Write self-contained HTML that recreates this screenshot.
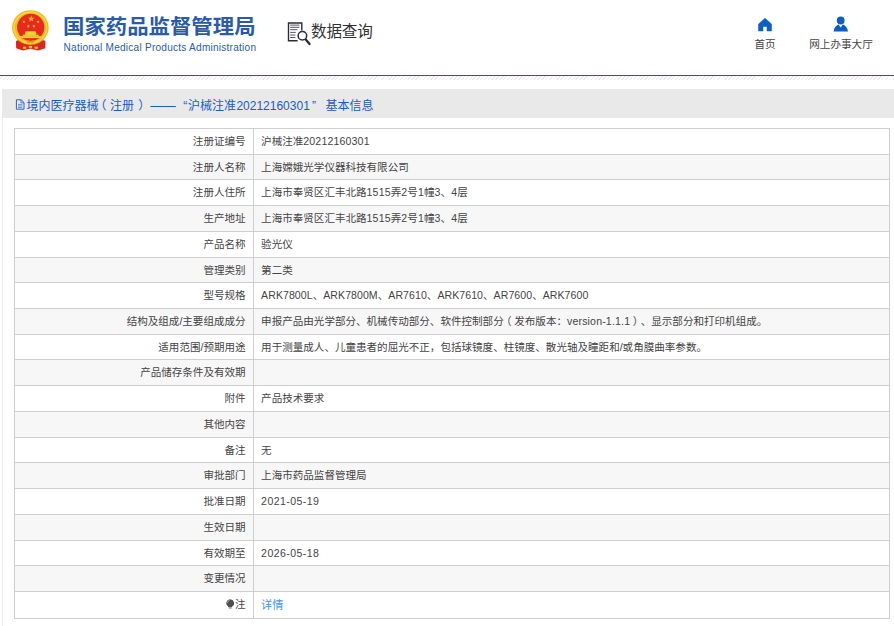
<!DOCTYPE html>
<html lang="zh-CN">
<head>
<meta charset="utf-8">
<title>国家药品监督管理局 数据查询</title>
<style>
*{box-sizing:border-box;}
html,body{margin:0;padding:0;background:#fff;}
body{text-spacing-trim:space-all;width:894px;height:626px;overflow:hidden;position:relative;font-family:"Liberation Sans","Noto Sans CJK SC",sans-serif;color:#333;}
.abs{position:absolute;}
#emblem{left:10px;top:8px;width:42px;height:46px;}
#t1{left:63px;top:12.3px;font-size:21.4px;line-height:30px;font-weight:bold;color:#2a5bab;white-space:nowrap;transform:scaleY(0.94);transform-origin:0 100%;}
#t2{left:63.6px;top:40.7px;font-size:10.1px;line-height:13px;color:#2a5cad;white-space:nowrap;letter-spacing:0.23px;}
#qicon{left:286px;top:21px;width:26px;height:26px;}
#qtext{left:311px;top:19px;font-size:15.6px;line-height:26px;color:#333;white-space:nowrap;letter-spacing:-0.2px;}
.nav{font-size:10.6px;line-height:14px;color:#444;white-space:nowrap;text-align:center;}
#n1{left:735px;width:60px;top:37px;}
#n2{left:801px;width:80px;top:37px;}
#homei{left:757.3px;top:16.7px;width:16px;height:16px;}
#useri{left:832px;top:15px;width:18px;height:17px;}
#bline{left:0;top:74.6px;width:894px;height:1.7px;background:#0b5fbd;}
#hatch{left:0;top:76.3px;width:894px;height:3.7px;background:repeating-linear-gradient(135deg,#fff 0,#fff 1.7px,#eaeaea 1.7px,#eaeaea 2.7px);}
#panel{left:2px;top:89px;width:900px;height:560px;border-left:1px solid #e9e9e9;}
#phead{left:2px;top:89px;width:900px;height:29.3px;background:#e9e9e9;}
#ptitle{left:0;top:97.7px;width:500px;height:16px;font-size:12px;line-height:16px;color:#1a5cc4;white-space:nowrap;}
#ptitle span{position:absolute;top:0;}
#picon{left:15.4px;top:98.5px;width:10px;height:11px;}
table{position:absolute;left:14px;top:128px;width:875.5px;border-collapse:collapse;table-layout:fixed;font-size:10.56px;color:#444;}
td{border:1px solid #d0cece;height:25.72px;padding:0;line-height:14px;vertical-align:middle;white-space:nowrap;overflow:hidden;}
td.l{width:238.5px;text-align:right;padding-right:6.9px;}
td.v{padding-left:7.6px;}
tr:nth-child(even) td{background:#f7f7f7;}
tr:last-child td{height:27.5px;}
tr.u td{padding-bottom:2px;}
.n{letter-spacing:0.17px;}
.m{letter-spacing:0.07px;}
.dt{letter-spacing:0.42px;}
.pc{display:inline-block;width:1em;text-align:center;font-feature-settings:"halt";}
a.d{color:#3f97f7;text-decoration:none;font-size:11.2px;position:relative;top:1px;}
</style>
</head>
<body>
<svg id="emblem" class="abs" viewBox="0 0 42 46">
  <path d="M7.4 32.2Q5.8 32.6 5.9 34.5L6.2 40.2L12.8 42.5L20.5 40.7L28.2 42.5L35.2 40.2L35.5 34.5Q35.6 32.6 34 32.2Z" fill="#da261c"/>
  <ellipse cx="20.4" cy="19.5" rx="18.3" ry="17.2" fill="#edb91e"/>
  <ellipse cx="20.4" cy="19.5" rx="16.3" ry="15.4" fill="none" stroke="#f8d63e" stroke-width="1.6"/>
  <circle cx="20.7" cy="19.3" r="13.6" fill="#e8291f"/>
  <polygon points="21.20,7.20 22.05,9.64 24.62,9.69 22.57,11.24 23.32,13.71 21.20,12.24 19.08,13.71 19.83,11.24 17.78,9.69 20.35,9.64" fill="#e6b422"/>
  <polygon points="13.90,12.10 14.32,13.32 15.61,13.34 14.58,14.12 14.96,15.36 13.90,14.62 12.84,15.36 13.22,14.12 12.19,13.34 13.48,13.32" fill="#eec02a"/><polygon points="28.10,12.10 28.52,13.32 29.81,13.34 28.78,14.12 29.16,15.36 28.10,14.62 27.04,15.36 27.42,14.12 26.39,13.34 27.68,13.32" fill="#eec02a"/><polygon points="18.30,16.40 18.72,17.62 20.01,17.64 18.98,18.42 19.36,19.66 18.30,18.92 17.24,19.66 17.62,18.42 16.59,17.64 17.88,17.62" fill="#eec02a"/><polygon points="23.90,16.40 24.32,17.62 25.61,17.64 24.58,18.42 24.96,19.66 23.90,18.92 22.84,19.66 23.22,18.42 22.19,17.64 23.48,17.62" fill="#eec02a"/>
  <path d="M15.6 23.3h10l0.9 2.4h-0.6v2.4H15.3v-2.4h-0.6z" fill="#f6d038"/>
  <path d="M12.6 26.6h16v1.6h-16z" fill="#f3c92e"/>
  <path d="M9.9 28.1h21.6v2H9.9z" fill="#f4cd30"/>
  <path d="M16 33.6q2.2-2.4 4.4-0.3q2.2-2.1 4.4 0.3q-2.2 2.6-4.4 0.6q-2.2 2-4.4-0.6z" fill="#d99a16"/>
  <ellipse cx="14.6" cy="39.7" rx="1.9" ry="1.3" fill="#efbf26"/><ellipse cx="20.4" cy="39.1" rx="1.9" ry="1.3" fill="#efbf26"/><ellipse cx="26.2" cy="39.7" rx="1.9" ry="1.3" fill="#efbf26"/>
</svg>
<div id="t1" class="abs">国家药品监督管理局</div>
<div id="t2" class="abs">National Medical Products Administration</div>

<svg id="qicon" class="abs" viewBox="0 0 26 26" fill="none" stroke="#2e2c3c" stroke-width="1.3">
  <path d="M11.6 19.8H2.5V2H15.8V9.6" stroke-width="1.4"/>
  <path d="M4.2 4.1H13.4M4.2 6.3H13.4M4.2 8.7H11.4M4.2 11.4H9.8M4.2 14H9.4M4.2 16.5H9.4" stroke-width="0.8"/>
  <circle cx="16.4" cy="14.8" r="4.3" stroke-width="1.5" fill="#fff"/>
  <path d="M19.8 18.6L23.5 23" stroke-width="2.3" stroke-linecap="round"/>
</svg>
<div id="qtext" class="abs">数据查询</div>

<svg id="homei" class="abs" viewBox="0 0 16 16"><path d="M8 1.2L1.5 7V14H6V9.4H10V14H14.5V7Z" fill="#0b5fc4" stroke="#0b5fc4" stroke-width="0.5" stroke-linejoin="round"/></svg>
<div id="n1" class="abs nav">首页</div>
<svg id="useri" class="abs" viewBox="0 0 18 17"><circle cx="8.7" cy="5.5" r="3.9" fill="#0b5fc4"/><path d="M1.6 16.5C2 12.5 4.5 10.2 6.6 9.6L8.7 12.6L10.8 9.6C13 10.2 15.6 12.5 16 16.5Z" fill="#0b5fc4"/></svg>
<div id="n2" class="abs nav">网上办事大厅</div>

<div id="bline" class="abs"></div>
<div id="hatch" class="abs"></div>

<div id="panel" class="abs"></div>
<div id="phead" class="abs"></div>
<svg id="picon" class="abs" viewBox="0 0 10 11" fill="none" stroke="#2a66c8" stroke-width="1"><path d="M1.4 0.8H6.2L9 3.6V10.2H1.4Z"/><path d="M6 1V3.8H8.8" stroke-width="0.8"/><path d="M3 5.4H7.4M3 7H7.4M3 8.6H7.4" stroke-width="0.75" stroke="#3f76d0"/></svg>
<div id="ptitle" class="abs"><span style="left:26.4px">境内医疗器械</span><span style="left:94.6px">（</span><span style="left:110px">注册</span><span style="left:138.3px">）</span><span style="left:150.2px;font-size:12.7px">——</span><span style="left:183.3px">“</span><span style="left:188px">沪械注准</span><span style="left:236.4px">20212160301</span><span style="left:311.9px">”</span><span style="left:325.5px">基本信息</span></div>

<table>
<tr><td class="l">注册证编号</td><td class="v">沪械注准<span class="n">20212160301</span></td></tr>
<tr><td class="l">注册人名称</td><td class="v">上海嫦娥光学仪器科技有限公司</td></tr>
<tr class="u"><td class="l">注册人住所</td><td class="v">上海市奉贤区汇丰北路<span class="n">1515</span>弄<span class="n">2</span>号<span class="n">1</span>幢<span class="n">3</span>、<span class="n">4</span>层</td></tr>
<tr class="u"><td class="l">生产地址</td><td class="v">上海市奉贤区汇丰北路<span class="n">1515</span>弄<span class="n">2</span>号<span class="n">1</span>幢<span class="n">3</span>、<span class="n">4</span>层</td></tr>
<tr><td class="l">产品名称</td><td class="v">验光仪</td></tr>
<tr><td class="l">管理类别</td><td class="v">第二类</td></tr>
<tr class="u"><td class="l">型号规格</td><td class="v"><span class="m">ARK7800L</span>、<span class="m">ARK7800M</span>、<span class="m">AR7610</span>、<span class="m">ARK7610</span>、<span class="m">AR7600</span>、<span class="m">ARK7600</span></td></tr>
<tr><td class="l">结构及组成/主要组成成分</td><td class="v">申报产品由光学部分、机械传动部分、软件控制部分<span class="pc">（</span>发布版本：<span class="n">version-1.1.1</span><span class="pc">）</span>、显示部分和打印机组成。</td></tr>
<tr><td class="l">适用范围/预期用途</td><td class="v">用于测量成人、儿童患者的屈光不正，包括球镜度、柱镜度、散光轴及瞳距和/或角膜曲率参数。</td></tr>
<tr class="u"><td class="l">产品储存条件及有效期</td><td class="v"></td></tr>
<tr class="u"><td class="l">附件</td><td class="v">产品技术要求</td></tr>
<tr><td class="l">其他内容</td><td class="v"></td></tr>
<tr><td class="l">备注</td><td class="v">无</td></tr>
<tr class="u"><td class="l">审批部门</td><td class="v">上海市药品监督管理局</td></tr>
<tr><td class="l">批准日期</td><td class="v"><span class="dt">2021-05-19</span></td></tr>
<tr><td class="l">生效日期</td><td class="v"></td></tr>
<tr><td class="l">有效期至</td><td class="v"><span class="dt">2026-05-18</span></td></tr>
<tr class="u"><td class="l">变更情况</td><td class="v"></td></tr>
<tr class="u"><td class="l"><svg width="8.4" height="10" viewBox="0 0 8.4 10" style="vertical-align:-1.2px;margin-right:0.9px"><path d="M4.2 0.2a3.9 3.9 0 0 1 2.2 7.1L6 8.2H2.4L2 7.3A3.9 3.9 0 0 1 4.2 0.2z" fill="#4e4e50"/><path d="M1.5 3.6a2.7 2.7 0 0 1 1.9-2.3" fill="none" stroke="#b9b9bd" stroke-width="0.8" stroke-linecap="round"/><rect x="2.7" y="8.2" width="3" height="1.5" rx="0.5" fill="#9a9a9e"/></svg>注</td><td class="v"><a class="d">详情</a></td></tr>
</table>
</body>
</html>
